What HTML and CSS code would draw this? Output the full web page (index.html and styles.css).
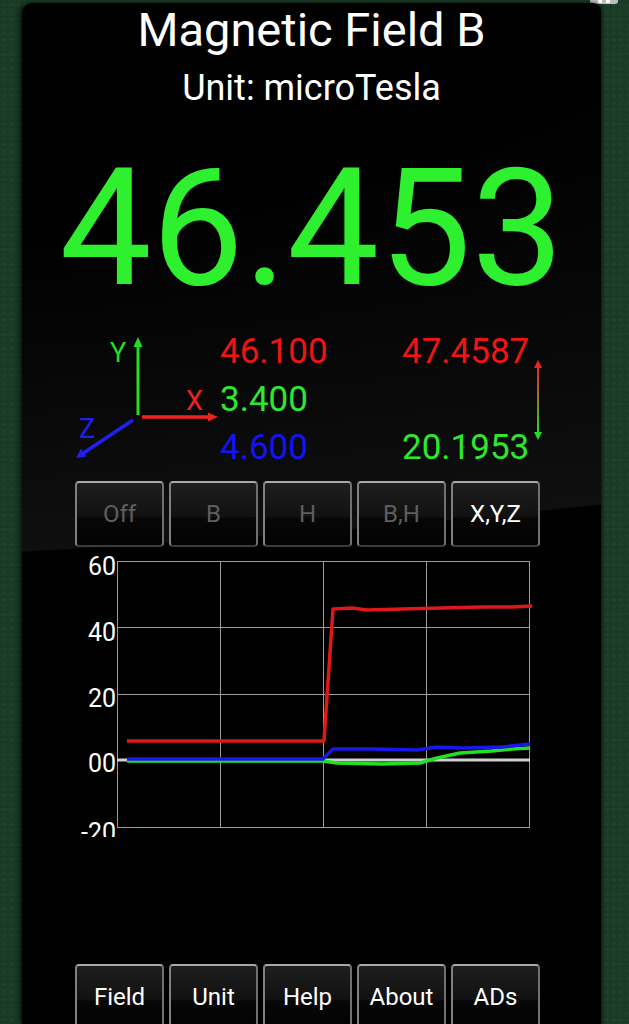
FILE: index.html
```html
<!DOCTYPE html>
<html lang="en">
<head>
<meta charset="utf-8">
<title>Magnetic Field B</title>
<link rel="stylesheet" href="styles.css">
</head>
<body>
<div class="tab"><span></span><span></span></div>
<main class="panel">
  <h1 class="title">Magnetic Field B</h1>
  <p class="unit">Unit: microTesla</p>
  <div class="value">46.453</div>

  <section class="readout">
    <svg class="axes" width="150" height="144" viewBox="0 0 150 144">
      <line x1="68" y1="87" x2="68" y2="16" stroke="#22dd22" stroke-width="3"/>
      <polygon points="68,9 63.5,19 72.5,19" fill="#22dd22"/>
      <text x="40" y="34" class="ax g">Y</text>
      <line x1="72" y1="89" x2="140" y2="89" stroke="#ee2222" stroke-width="3.5"/>
      <polygon points="148,89 138,84.5 138,93.5" fill="#ee2222"/>
      <text x="116" y="82" class="ax r">X</text>
      <line x1="63" y1="92" x2="12" y2="126" stroke="#2020ee" stroke-width="3.5"/>
      <polygon points="6,130 11,120.5 16.5,128.5" fill="#2020ee"/>
      <text x="9" y="110" class="ax b">Z</text>
    </svg>
    <div class="col">
      <span class="r">46.100</span>
      <span class="g">3.400</span>
      <span class="b">4.600</span>
    </div>
    <div class="col">
      <span class="r">47.4587</span>
      <span></span>
      <span class="g">20.1953</span>
    </div>
    <svg class="range" width="12" height="144" viewBox="0 0 12 144">
      <defs>
        <linearGradient id="rg" x1="0" y1="0" x2="0" y2="1">
          <stop offset="0" stop-color="#ee2222"/>
          <stop offset="1" stop-color="#22dd22"/>
        </linearGradient>
      </defs>
      <rect x="3" y="37" width="2" height="70" fill="url(#rg)"/>
      <polygon points="4,32 0,40 8,40" fill="#ee2222"/>
      <polygon points="4,112 0,104 8,104" fill="#22dd22"/>
    </svg>
  </section>

  <nav class="btnrow">
    <div class="btn">Off</div>
    <div class="btn">B</div>
    <div class="btn">H</div>
    <div class="btn">B,H</div>
    <div class="btn on">X,Y,Z</div>
  </nav>

  <svg class="chart" width="579" height="287" viewBox="0 0 579 287">
    <g stroke="#9a9a9a" stroke-width="1" fill="none">
      <line x1="95.5" y1="11" x2="95.5" y2="277"/>
      <line x1="198.5" y1="11" x2="198.5" y2="277"/>
      <line x1="301.5" y1="11" x2="301.5" y2="277"/>
      <line x1="404.5" y1="11" x2="404.5" y2="277"/>
      <line x1="507.5" y1="11" x2="507.5" y2="277"/>
      <line x1="95" y1="11.5" x2="508" y2="11.5"/>
      <line x1="95" y1="77.5" x2="508" y2="77.5"/>
      <line x1="95" y1="144.5" x2="508" y2="144.5"/>
      <line x1="95" y1="277.5" x2="508" y2="277.5"/>
    </g>
    <line x1="95" y1="210" x2="508" y2="210" stroke="#cfcfcf" stroke-width="3"/>
    <g class="lbl">
      <text x="94" y="25">60</text>
      <text x="94" y="91">40</text>
      <text x="94" y="157">20</text>
      <text x="94" y="222">00</text>
      <text x="94" y="291">-20</text>
    </g>
    <g fill="none" stroke-width="3.5" stroke-linejoin="round">
      <polyline stroke="#e01818" points="105,191 302,191 311,59 330,58 345,60 380,59 420,58 460,57 490,57 510,56"/>
      <polyline stroke="#22e022" points="105,211 301,211 315,213 360,214 398,213 415,208 438,203 470,201 490,199 508,198"/>
      <polyline stroke="#1818e8" points="105,209 301,209 311,199 348,199 395,200 415,197 440,198 480,197 508,194"/>
    </g>
  </svg>

  <nav class="btnrow menu">
    <div class="btn on">Field</div>
    <div class="btn on">Unit</div>
    <div class="btn on">Help</div>
    <div class="btn on">About</div>
    <div class="btn on">ADs</div>
  </nav>
</main>
</body>
</html>
```
FILE: styles.css
```css
html, body {
  margin: 0;
  padding: 0;
  height: 100%;
  overflow: hidden;
}
body {
  background-color: #1b3d28;
  background-image:
    radial-gradient(circle at 30% 40%, rgba(0,0,0,0.08) 0 1px, rgba(0,0,0,0) 2px),
    radial-gradient(circle at 70% 70%, rgba(255,255,255,0.03) 0 1px, rgba(0,0,0,0) 2px);
  background-size: 5px 5px, 7px 7px;
  font-family: Roboto, "Noto Sans", sans-serif;
  position: relative;
}
.tab {
  position: absolute;
  top: 0;
  left: 590px;
  width: 28px;
  height: 4px;
  background: #bdbdbd;
  border-radius: 0 0 3px 3px;
  display: flex;
  justify-content: center;
  gap: 4px;
}
.tab span {
  width: 4px;
  height: 3px;
  background: #fff;
}
.panel {
  position: relative;
  box-sizing: border-box;
  margin: 3px 0 0 22px;
  width: 579px;
  height: 1021px;
  overflow: hidden;
  border-radius: 10px 8px 0 0;
  padding-top: 1px;
  background:
    radial-gradient(ellipse 2577px 565px at -600px 0px, #000 45%, #0f0f0f 99.7%, #000 100%);
  box-shadow: -3px 0 5px rgba(0,0,0,0.6), 2px 0 3px rgba(0,0,0,0.4);
  display: flex;
  flex-direction: column;
}
.panel > * {
  flex-shrink: 0;
}
.title {
  margin: 0;
  font-weight: 400;
  font-size: 47px;
  line-height: 52px;
  color: #fff;
  text-align: center;
}
.unit {
  margin: 12px 0 0;
  font-size: 36px;
  line-height: 40px;
  color: #fff;
  text-align: center;
}
.value {
  margin-top: 35px;
  font-size: 164px;
  line-height: 170px;
  color: #2ef02e;
  text-align: center;
}
.readout {
  margin-top: 15px;
  padding-left: 48px;
  display: grid;
  grid-template-columns: 150px 182px 132px 12px;
  height: 144px;
}
.col {
  display: flex;
  flex-direction: column;
}
.col span {
  height: 48px;
  font-size: 35px;
  line-height: 48px;
}
.r { color: #f01414; fill: #ee2222; }
.g { color: #2ee82e; fill: #22dd22; }
.b { color: #1414f0; fill: #2020ee; }
.ax {
  font-family: Roboto, "Noto Sans", sans-serif;
  font-size: 27px;
}
.btnrow {
  margin-top: 9px;
  padding-left: 53px;
  display: flex;
  gap: 5px;
}
.btn {
  box-sizing: border-box;
  width: 89px;
  height: 66px;
  border: 2px solid;
  border-color: #a8a8a8 #707070 #3c3c3c #808080;
  border-radius: 4px;
  background: linear-gradient(#1e1e1e, #111 55%, #070707 56%, #030303);
  color: #5e5e5e;
  font-size: 24px;
  display: flex;
  align-items: center;
  justify-content: center;
}
.btn.on {
  color: #fff;
}
.menu {
  margin-top: 127px;
}
.chart {
  margin-top: 3px;
  display: block;
}
.lbl text {
  font-family: Roboto, "Noto Sans", sans-serif;
  font-size: 25px;
  fill: #fff;
  text-anchor: end;
}
```
